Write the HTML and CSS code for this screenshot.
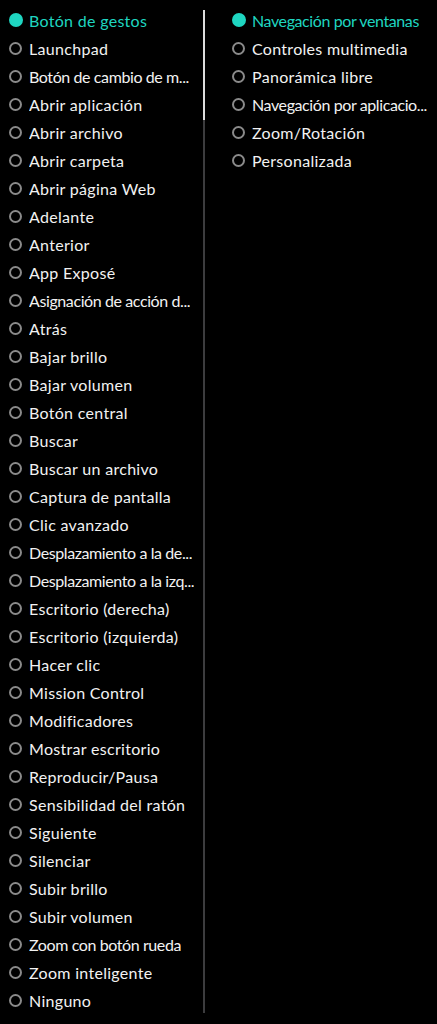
FILE: index.html
```html
<!DOCTYPE html>
<html lang="es">
<head>
<meta charset="utf-8">
<link rel="stylesheet" href="styles.css">
</head>
<body>
<div class="panel">
  <ul class="list left">
    <li class="item on"><span class="radio"></span><span class="label">Botón de gestos</span></li>
    <li class="item"><span class="radio"></span><span class="label">Launchpad</span></li>
    <li class="item"><span class="radio"></span><span class="label cond">Botón de cambio de m...</span></li>
    <li class="item"><span class="radio"></span><span class="label">Abrir aplicación</span></li>
    <li class="item"><span class="radio"></span><span class="label">Abrir archivo</span></li>
    <li class="item"><span class="radio"></span><span class="label">Abrir carpeta</span></li>
    <li class="item"><span class="radio"></span><span class="label">Abrir página Web</span></li>
    <li class="item"><span class="radio"></span><span class="label">Adelante</span></li>
    <li class="item"><span class="radio"></span><span class="label">Anterior</span></li>
    <li class="item"><span class="radio"></span><span class="label">App Exposé</span></li>
    <li class="item"><span class="radio"></span><span class="label cond">Asignación de acción d...</span></li>
    <li class="item"><span class="radio"></span><span class="label">Atrás</span></li>
    <li class="item"><span class="radio"></span><span class="label">Bajar brillo</span></li>
    <li class="item"><span class="radio"></span><span class="label">Bajar volumen</span></li>
    <li class="item"><span class="radio"></span><span class="label">Botón central</span></li>
    <li class="item"><span class="radio"></span><span class="label">Buscar</span></li>
    <li class="item"><span class="radio"></span><span class="label">Buscar un archivo</span></li>
    <li class="item"><span class="radio"></span><span class="label">Captura de pantalla</span></li>
    <li class="item"><span class="radio"></span><span class="label">Clic avanzado</span></li>
    <li class="item"><span class="radio"></span><span class="label cond">Desplazamiento a la de...</span></li>
    <li class="item"><span class="radio"></span><span class="label cond">Desplazamiento a la izq...</span></li>
    <li class="item"><span class="radio"></span><span class="label">Escritorio (derecha)</span></li>
    <li class="item"><span class="radio"></span><span class="label">Escritorio (izquierda)</span></li>
    <li class="item"><span class="radio"></span><span class="label">Hacer clic</span></li>
    <li class="item"><span class="radio"></span><span class="label">Mission Control</span></li>
    <li class="item"><span class="radio"></span><span class="label">Modificadores</span></li>
    <li class="item"><span class="radio"></span><span class="label">Mostrar escritorio</span></li>
    <li class="item"><span class="radio"></span><span class="label">Reproducir/Pausa</span></li>
    <li class="item"><span class="radio"></span><span class="label">Sensibilidad del ratón</span></li>
    <li class="item"><span class="radio"></span><span class="label">Siguiente</span></li>
    <li class="item"><span class="radio"></span><span class="label">Silenciar</span></li>
    <li class="item"><span class="radio"></span><span class="label">Subir brillo</span></li>
    <li class="item"><span class="radio"></span><span class="label">Subir volumen</span></li>
    <li class="item"><span class="radio"></span><span class="label cond">Zoom con botón rueda</span></li>
    <li class="item"><span class="radio"></span><span class="label">Zoom inteligente</span></li>
    <li class="item"><span class="radio"></span><span class="label">Ninguno</span></li>
  </ul>
  <div class="scrollbar"><div class="thumb"></div></div>
  <ul class="list right">
    <li class="item on"><span class="radio"></span><span class="label cond">Navegación por ventanas</span></li>
    <li class="item"><span class="radio"></span><span class="label">Controles multimedia</span></li>
    <li class="item"><span class="radio"></span><span class="label">Panorámica libre</span></li>
    <li class="item"><span class="radio"></span><span class="label cond">Navegación por aplicacio...</span></li>
    <li class="item"><span class="radio"></span><span class="label">Zoom/Rotación</span></li>
    <li class="item"><span class="radio"></span><span class="label">Personalizada</span></li>
  </ul>
</div>
</body>
</html>
```

FILE: styles.css
```css
html, body {
  margin: 0;
  padding: 0;
  background: #000;
}
body {
  width: 437px;
  height: 1024px;
  overflow: hidden;
  font-family: Lato, "Noto Sans", "DejaVu Sans", sans-serif;
  color: #f2f2f2;
}
.panel {
  display: flex;
  align-items: flex-start;
}
.list {
  list-style: none;
  margin: 0;
  padding: 6px 0 0 0;
}
.list.left {
  width: 194px;
  padding-left: 9px;
}
.list.right {
  flex: 1;
  padding-left: 27px;
}
.item {
  display: flex;
  align-items: center;
  height: 28px;
  gap: 7px;
  white-space: nowrap;
  font-size: 16px;
  letter-spacing: 0.3px;
}
.radio {
  flex: none;
  width: 13px;
  height: 13px;
  box-sizing: border-box;
  border: 2px solid #8a8a8a;
  border-radius: 50%;
}
.item.on {
  color: #1fd6c1;
}
.item.on .radio {
  width: 14px;
  height: 14px;
  margin-right: -1px;
  border-color: #1fd6c1;
  background: #1fd6c1;
}
.label {
  overflow: hidden;
}
.label.cond {
  letter-spacing: -0.4px;
}
.scrollbar {
  flex: none;
  width: 2px;
  height: 1003px;
  margin-top: 10px;
  background: #3c3c3e;
}
.thumb {
  height: 110px;
  background: #dcdcdc;
}
```
